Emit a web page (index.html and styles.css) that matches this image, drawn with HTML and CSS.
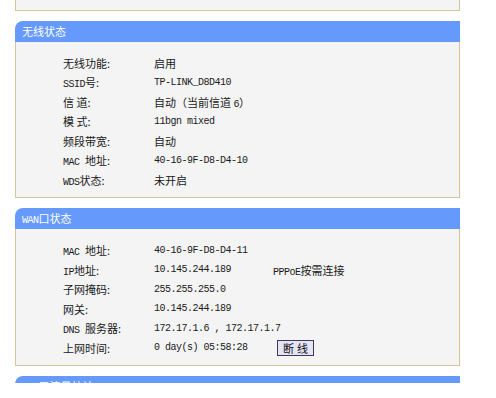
FILE: index.html
```html
<html>
<head>
<meta http-equiv="Content-Type" content="text/html; charset=utf-8">
<title>运行状态</title>
<link rel="stylesheet" href="styles.css">
</head>
<body>
<div class="page">
<div class="panelTail"></div>

<div class="panel">
<div class="panelHead">无线状态</div>
<div class="panelBody">
<div class="row"><span>无线功能:</span><span>启用</span></div>
<div class="row"><span><span class="en">SSID</span>号:</span><span class="en">TP-LINK_D8D410</span></div>
<div class="row"><span>信 道:</span><span>自动（当前信道 <span class="en">6</span>）</span></div>
<div class="row"><span>模 式:</span><span class="en">11bgn mixed</span></div>
<div class="row"><span>频段带宽:</span><span>自动</span></div>
<div class="row"><span><span class="en">MAC </span>地址:</span><span class="en">40-16-9F-D8-D4-10</span></div>
<div class="row"><span><span class="en">WDS</span>状态:</span><span>未开启</span></div>
</div>
</div>

<div class="panel">
<div class="panelHead"><span class="en">WAN</span>口状态</div>
<div class="panelBody wan">
<div class="row"><span><span class="en">MAC </span>地址:</span><span class="en">40-16-9F-D8-D4-11</span></div>
<div class="row"><span><span class="en">IP</span>地址:</span><span class="en">10.145.244.189</span><span><span class="en">PPPoE</span>按需连接</span></div>
<div class="row"><span>子网掩码:</span><span class="en">255.255.255.0</span></div>
<div class="row"><span>网关:</span><span class="en">10.145.244.189</span></div>
<div class="row"><span><span class="en">DNS </span>服务器:</span><span class="en">172.17.1.6 , 172.17.1.7</span></div>
<div class="row"><span>上网时间:</span><span class="en">0 day(s) 05:58:28</span><span><input type="button" class="btn" value="断线"></span></div>
</div>
</div>

<div class="panel">
<div class="panelHead"><span class="en">WAN</span>口流量统计</div>
</div>
</div>
</body>
</html>
```

FILE: styles.css
```css
body{
margin:0;
background:#fff;
font-family:"Noto Sans CJK SC",sans-serif;
font-size:11px;
color:#1a1a1a;
}
.en{
font-family:"Liberation Mono",monospace;
font-size:10px;
letter-spacing:-0.5px;
}
.page{
width:445px;
height:383px;
margin-left:15px;
overflow:hidden;
}
.panelTail{
height:10px;
background:#f4f4f4;
border:1px solid #d9c29c;
border-top:0;
}
.panel{
margin-top:10px;
}
.panelHead{
height:21px;
line-height:21px;
padding-left:7px;
background:#6699fc;
color:#fff;
border-top-left-radius:8px;
}
.panelBody{
background:#f4f4f4;
border:1px solid #d9c29c;
border-top:0;
padding:11px 0 7px 47px;
}
.panelBody.wan{
padding-top:12px;
padding-bottom:7px;
}
.row{
display:grid;
grid-template-columns:91px 119px auto;
height:19.5px;
align-items:center;
white-space:nowrap;
}
.btn{
font-family:"Noto Sans CJK SC",sans-serif;
font-size:11px;
letter-spacing:3px;
height:16px;
width:37px;
padding:0 0 0 3px;
margin-left:4px;
line-height:14px;
background:#e4e4f4;
border:1px solid #3a3a5a;
color:#111;
}
```
